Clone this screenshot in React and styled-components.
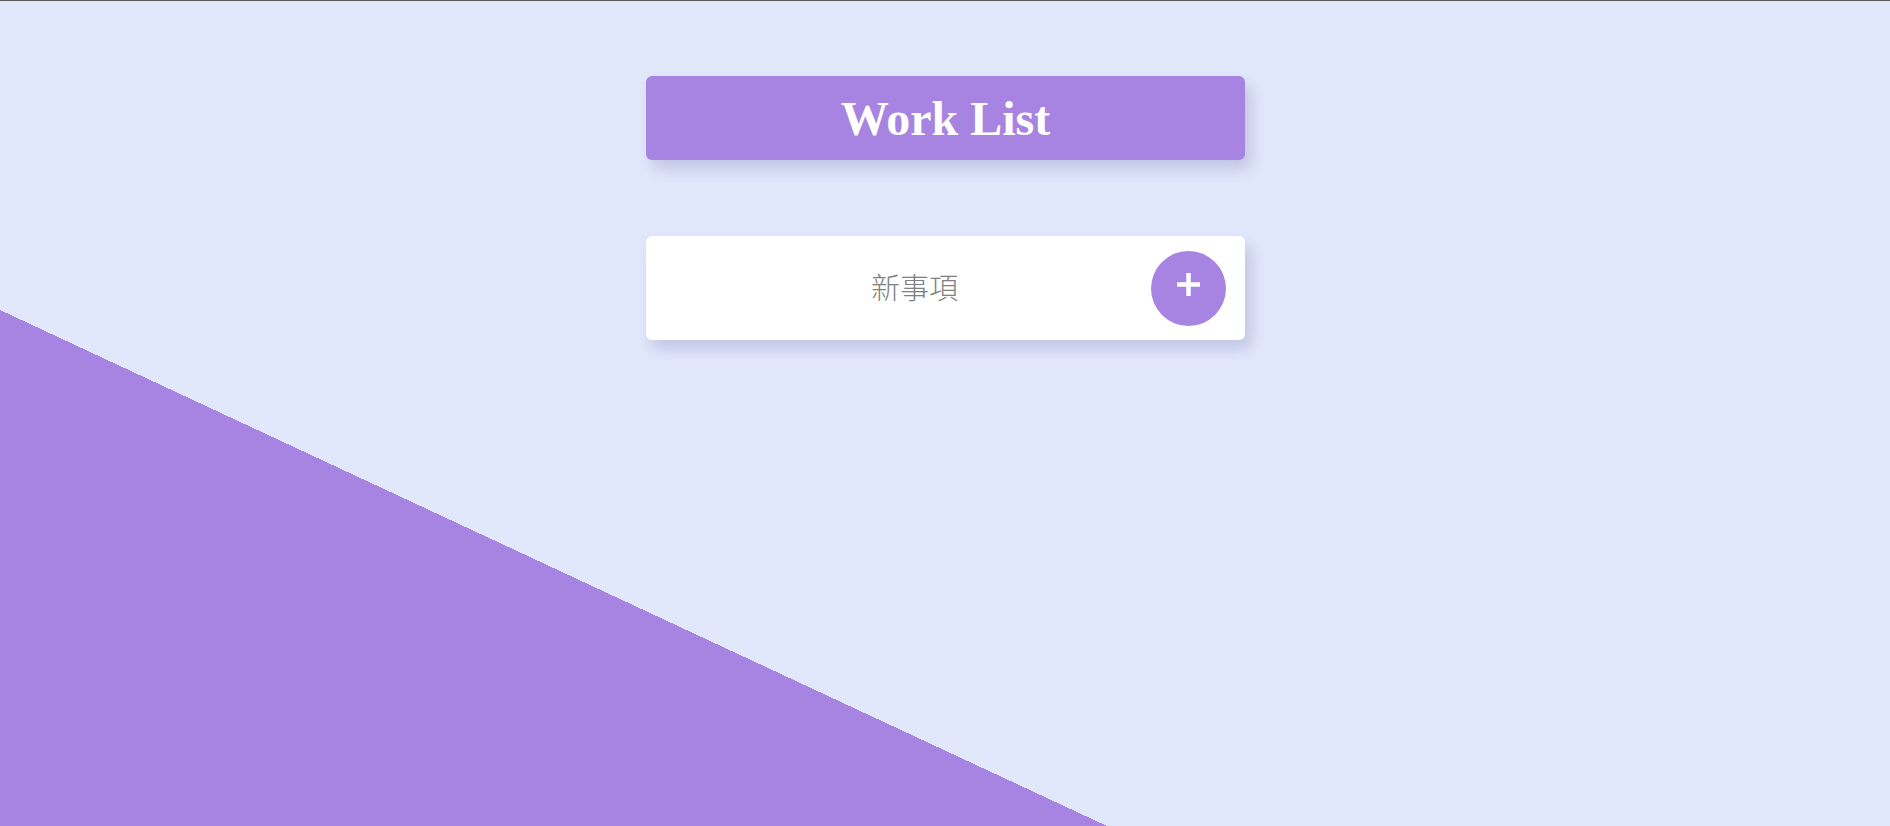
import styled, { createGlobalStyle } from "styled-components"

const GlobalStyle = createGlobalStyle`
    html, body {
        margin: 0;
        padding: 0;
    }
    body {
        background-color: #e2e8fc;
        border-top: 1px solid #5a5a5a;
    }
`

export default function App() {
    return (
        <Page>
            <GlobalStyle />
            <Title>Work List</Title>
            <AddBox>
                <TodoInput type="text" placeholder="新事項" />
                <AddButton aria-label="add">
                    <svg width="23" height="23" viewBox="0 0 23 23">
                        <path d="M11.5 0v23M0 11.5h23" stroke="#fff" strokeWidth="4.5" />
                    </svg>
                </AddButton>
            </AddBox>
        </Page>
    )
}

const Page = styled.div`
    min-height: calc(100vh - 1px);
    box-sizing: border-box;
    display: flex;
    flex-direction: column;
    align-items: center;
    padding-top: 75px;
    padding-left: 1px;
    gap: 76px;
    background: linear-gradient(to top right, #a784e1 50%, transparent 50%) no-repeat left bottom;
    background-size: 58.6vw 62.5vh;
`

const Title = styled.h1`
    width: 599px;
    height: 84px;
    margin: 0;
    display: flex;
    align-items: center;
    justify-content: center;
    background-color: #a784e1;
    border-radius: 6px;
    box-shadow: 6px 9px 16px rgba(90, 90, 150, 0.25);
    color: #ffffff;
    font-family: "Liberation Serif", serif;
    font-weight: bold;
    font-size: 48px;
`

const AddBox = styled.div`
    width: 599px;
    height: 104px;
    display: flex;
    align-items: center;
    background-color: #ffffff;
    border-radius: 6px;
    box-shadow: 6px 9px 16px rgba(90, 90, 150, 0.25);
    padding-right: 19px;
    box-sizing: border-box;
`

const TodoInput = styled.input`
    flex: 1;
    min-width: 0;
    height: 100%;
    border: none;
    outline: none;
    background: transparent;
    padding: 0 0 4px 32px;
    text-align: center;
    font-family: "Noto Sans CJK TC", "Noto Sans", sans-serif;
    font-weight: 300;
    font-size: 29px;
    color: #555;

    &::placeholder {
        color: #808080;
    }
`

const AddButton = styled.button`
    width: 75px;
    height: 75px;
    flex-shrink: 0;
    border: none;
    border-radius: 50%;
    background-color: #a784e1;
    display: flex;
    align-items: center;
    justify-content: center;
    padding: 0 0 8px;
    cursor: pointer;
`
